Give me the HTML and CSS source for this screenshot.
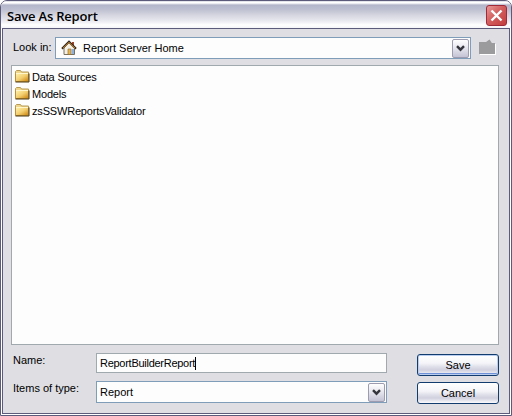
FILE: index.html
```html
<!DOCTYPE html>
<html lang="en">
<head>
<meta charset="utf-8">
<title>Save As Report</title>
<link rel="stylesheet" href="styles.css">
</head>
<body>
<svg class="defs" width="0" height="0">
  <defs>
    <linearGradient id="gold" x1="0" y1="0" x2="1" y2="1">
      <stop offset="0" stop-color="#fff3ae"/><stop offset=".5" stop-color="#f3cf70"/><stop offset="1" stop-color="#c98008"/>
    </linearGradient>
    <symbol id="folder" viewBox="0 0 16 13">
      <path d="M1.500 11V1.500l1-1h4l1 1.500h7v9z" fill="#f0d68a" stroke="#b79a55"/>
      <path d="M1.500 3.500h13v8h-13z" fill="url(#gold)" stroke="#c09032"/>
      <path d="M2 3.500h12" stroke="#fff6cc"/>
      <path d="M1.500 12H15V3.500" fill="none" stroke="#4d3a14"/>
    </symbol>
    <symbol id="chevron" viewBox="0 0 9 7">
      <path d="M1 1.200l3.500 3.500L8 1.200" fill="none" stroke="#35353d" stroke-width="2.400"/>
    </symbol>
  </defs>
</svg>
<div class="dialog">
  <div class="titlebar">
    <h1 class="title">Save As Report</h1>
    <button class="close" aria-label="Close">
      <svg width="13" height="13" viewBox="0 0 13 13"><path d="M1.500 1.500l10 10M11.500 1.500l-10 10" stroke="#fff" stroke-width="2.400"/></svg>
    </button>
  </div>
  <div class="content">
    <div class="lookin">
      <span class="label look-label">Look in:</span>
      <div class="combo">
        <svg class="home" width="16" height="16" viewBox="0 0 16 16">
          <path d="M3 8v6.500h10.500V8L8 2.500z" fill="#f4f0e4" stroke="#77715f"/>
          <path d="M11 2h2v4l-2-2z" fill="#a3452c"/>
          <path d="M1 8.800L8 1.800l7 7" fill="none" stroke="#382b20" stroke-width="2.200"/>
          <path d="M2 8.300L8 2.500l6 5.800" fill="none" stroke="#df9b3b" stroke-width="1"/>
          <path d="M7 9h3v5.500H7z" fill="#e8b64b" stroke="#8b6531" stroke-width=".6"/>
          <path d="M10.500 9v5h2.500V9z" fill="#8eb0dc"/>
        </svg>
        <span class="place">Report Server Home</span>
        <span class="drop"><svg width="9" height="7"><use href="#chevron"/></svg></span>
      </div>
      <svg class="up" width="17" height="15" viewBox="0 0 17 15">
        <path d="M1 4h8l2.500-3L14 4h3v11H1z" fill="#fff"/>
        <path d="M0 2h7l3.500-2.500L13 3h3v11H0z" fill="#9b9b9d"/>
      </svg>
    </div>
    <ul class="list">
      <li><svg width="16" height="13"><use href="#folder"/></svg><span>Data Sources</span></li>
      <li><svg width="16" height="13"><use href="#folder"/></svg><span>Models</span></li>
      <li><svg width="16" height="13"><use href="#folder"/></svg><span>zsSSWReportsValidator</span></li>
    </ul>
    <div class="form">
      <span class="label">Name:</span>
      <div class="field"><span class="value">ReportBuilderReport</span><i class="caret"></i></div>
      <button class="btn default">Save</button>
      <span class="label">Items of type:</span>
      <div class="field select"><span>Report</span><span class="drop"><svg width="9" height="7"><use href="#chevron"/></svg></span></div>
      <button class="btn">Cancel</button>
    </div>
  </div>
</div>
</body>
</html>
```
FILE: styles.css
```css
* { box-sizing: border-box; }
body {
  margin: 0;
  background: #fff;
  font: 11px/14px "Liberation Sans", Arial, sans-serif;
  color: #000;
}
.defs { position: absolute; }
svg { display: block; flex: none; }
button { padding: 0; font: inherit; color: inherit; }
.dialog {
  display: flex;
  flex-direction: column;
  width: 512px;
  height: 416px;
  padding: 0 1px 1px;
  border: 1px solid #5c5b7c;
  border-radius: 7px 7px 0 0;
  background: #fff;
  overflow: hidden;
}
.titlebar {
  display: flex;
  align-items: center;
  justify-content: space-between;
  flex: none;
  height: 27px;
  margin: 0 -1px;
  padding: 2px 4px 0 6px;
  background: linear-gradient(#c9c9d8 0, #fff 1px, #fff 2px, #b3b5ca 4px, #bcbed0 8px, #d4d5df 14px, #e9e9f0 20px, #fff 24px, #f4f4f8 27px);
}
.title {
  margin: 0;
  font: 600 13px/18px "Open Sans", sans-serif;
  letter-spacing: -0.2px;
  white-space: nowrap;
}
.close {
  display: grid;
  place-items: center;
  width: 21px;
  height: 21px;
  border: 1px solid #a12a38;
  border-radius: 3px;
  background: linear-gradient(135deg, #e79a98, #d35f5f 45%, #c43c3c);
}
.content {
  flex: 1;
  padding: 8px 10px 0 8px;
  border: 1px solid #5c5b7c;
  background: #dedee3;
}
.lookin { display: flex; height: 22px; }
.label { padding-left: 2px; white-space: nowrap; }
.look-label { width: 44px; padding-top: 3px; }
.combo {
  display: flex;
  align-items: center;
  width: 416px;
  padding: 0 1px 0 5px;
  border: 1px solid #7f9db9;
  background: #fdfdfe;
}
.place { margin-left: 6px; }
.drop {
  display: grid;
  place-items: center;
  width: 17px;
  height: 19px;
  margin-left: auto;
  border: 1px solid #9c9bb0;
  border-radius: 2px;
  background: linear-gradient(#fff, #e4e4ed 50%, #c3c3d5);
}
.up { margin: 3px 0 0 8px; overflow: visible; }
.list {
  height: 280px;
  margin: 6px 0 8px;
  padding: 2px 0 0 2px;
  border: 1px solid #a0a9ae;
  background: #fdfdfe;
  list-style: none;
  letter-spacing: -0.18px;
}
.list li {
  display: flex;
  align-items: center;
  gap: 2px;
  height: 17px;
}
.form {
  display: grid;
  grid-template-columns: 85px 291px 1fr;
  grid-template-rows: 20px 22px;
  row-gap: 8px;
}
.field {
  display: flex;
  align-items: center;
  border: 1px solid #a0a9ae;
  padding-left: 3px;
  background: #fdfdfe;
}
.value { letter-spacing: -0.27px; }
.select { padding-right: 1px; border-color: #7f9db9; }
.caret { width: 1px; height: 13px; background: #000; }
.btn {
  justify-self: end;
  width: 82px;
  height: 22px;
  margin-top: 1px;
  border: 1px solid #123c6d;
  border-radius: 3px;
  background: linear-gradient(#fff, #f5f5f9 40%, #dedee9 60%, #d0d0df 75%, #fafafd);
}
.default { box-shadow: inset 0 0 0 1px #b9cdf0, inset 0 -2px 0 #6f91d8; }
```
